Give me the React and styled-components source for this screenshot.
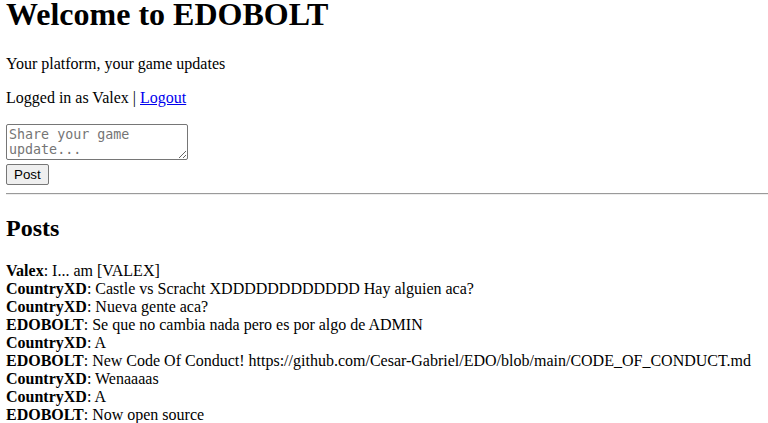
import styled, { createGlobalStyle } from "styled-components";

const GlobalStyle = createGlobalStyle`
	html, body {
		margin: 0;
		padding: 0;
		background: #ffffff;
	}

	body {
		font-family: "Liberation Serif", "Times New Roman", serif;
		font-size: 16px;
		color: #000000;
	}
`;

const posts = [
	{ author: "Valex", text: "I... am [VALEX]" },
	{ author: "CountryXD", text: "Castle vs Scracht XDDDDDDDDDDDD Hay alguien aca?" },
	{ author: "CountryXD", text: "Nueva gente aca?" },
	{ author: "EDOBOLT", text: "Se que no cambia nada pero es por algo de ADMIN" },
	{ author: "CountryXD", text: "A" },
	{
		author: "EDOBOLT",
		text: "New Code Of Conduct! https://github.com/Cesar-Gabriel/EDO/blob/main/CODE_OF_CONDUCT.md",
	},
	{ author: "CountryXD", text: "Wenaaaas" },
	{ author: "CountryXD", text: "A" },
	{ author: "EDOBOLT", text: "Now open source" },
];

export default function App() {
	return (
		<Page>
			<GlobalStyle />
			<Title>Welcome to EDOBOLT</Title>
			<Tagline>Your platform, your game updates</Tagline>
			<UserBar>
				Logged in as Valex | <LogoutLink href="#">Logout</LogoutLink>
			</UserBar>

			<PostForm onSubmit={(e) => e.preventDefault()}>
				<UpdateInput placeholder="Share your game update..." />
				<PostButton type="submit">Post</PostButton>
			</PostForm>

			<Divider />

			<SectionTitle>Posts</SectionTitle>
			<PostList>
				{posts.map((post, index) => {
					return (
						<PostItem key={index}>
							<Author>{post.author}</Author>: {post.text}
						</PostItem>
					);
				})}
			</PostList>
		</Page>
	);
}

const Page = styled.main`
	padding: 0 0 0 6px;
`;

const Title = styled.h1`
	font-size: 32px;
	font-weight: bold;
	line-height: 28px;
	margin: 0 0 27px;
`;

const Tagline = styled.p`
	margin: 0 0 16px;
	line-height: normal;
`;

const UserBar = styled.p`
	margin: 0 0 17px;
	line-height: normal;
`;

const LogoutLink = styled.a`
	color: #0000ee;
	text-decoration: underline;
`;

const PostForm = styled.form`
	display: flex;
	flex-direction: column;
	align-items: flex-start;
	gap: 4px;
	margin: 0;
`;

const UpdateInput = styled.textarea`
	box-sizing: border-box;
	width: 182px;
	height: 36px;
	padding: 2px;
	border: 1px solid #767676;
	border-radius: 2px;
	font-family: "DejaVu Sans Mono", "Liberation Mono", monospace;
	font-size: 13.333px;
	resize: both;

	&::placeholder {
		color: #757575;
	}
`;

const PostButton = styled.button`
	box-sizing: border-box;
	height: 21px;
	padding: 1px 7px;
	border: 1px solid #767676;
	border-radius: 2px;
	background: #efefef;
	font-family: "Liberation Sans", Arial, sans-serif;
	font-size: 13.333px;
	color: #000000;
	cursor: pointer;
`;

const Divider = styled.hr`
	margin: 8px 0;
	border: none;
	border-top: 1px solid #9a9a9a;
	border-bottom: 1px solid #eeeeee;
	height: 0;
`;

const SectionTitle = styled.h2`
	font-size: 24px;
	font-weight: bold;
	line-height: normal;
	margin: 20px 0;
`;

const PostList = styled.div`
	line-height: 18px;
`;

const PostItem = styled.div``;

const Author = styled.strong`
	font-weight: bold;
`;
